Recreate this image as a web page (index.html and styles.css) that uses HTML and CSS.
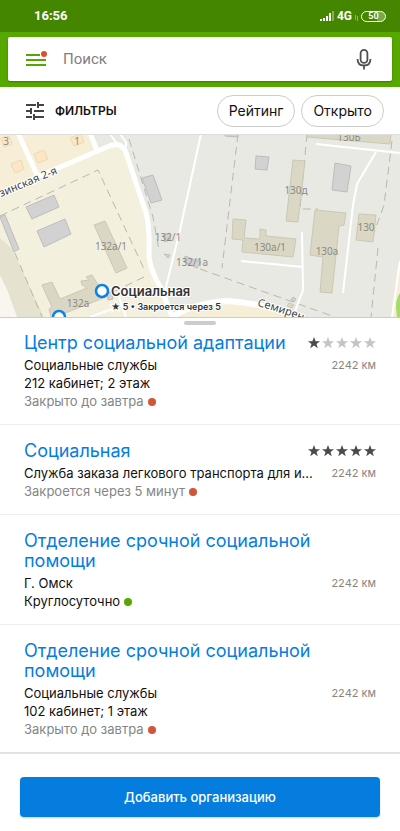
FILE: index.html
```html
<!DOCTYPE html>
<html lang="ru">
<head>
    <meta charset="UTF-8">
    <meta name="viewport" content="width=device-width, initial-scale=1.0">
    <title>Поиск</title>
    <link rel="stylesheet" href="styles.css">
</head>
<body>
    <header class="header">
        <div class="status-bar">
            <span class="time">16:56</span>
            <div class="status-icons">
                <svg width="16" height="12" viewBox="0 0 16 12" fill="#fff">
                    <path d="M1 9h2v2H1zM4 8h2v3H4zM7 6h2v5H7zM10 3h2v8h-2z"/>
                    <path d="M13 1h2v10h-2z" opacity=".35"/>
                </svg>
                <span class="network">4G</span>
                <svg class="arrows" width="5" height="6" viewBox="0 0 5 6" stroke="#fff" fill="none" opacity=".4">
                    <path d="M1.500 0v5M3.500 1v5"/>
                </svg>
                <span class="battery">50</span>
            </div>
        </div>
        <form class="search">
            <button class="menu-btn" type="button" aria-label="Меню">
                <svg width="24" height="20" viewBox="0 0 24 20">
                    <path d="M2 6h14M2 11h20M2 16h20" stroke="#56a800" stroke-width="2"/>
                    <circle cx="20" cy="5" r="3" fill="#d9502f"/>
                </svg>
            </button>
            <input class="search-input" type="text" placeholder="Поиск" aria-label="Поиск">
            <button class="mic-btn" type="button" aria-label="Голосовой поиск">
                <svg width="16" height="22" viewBox="0 0 16 22" fill="none" stroke="#505050" stroke-width="1.800">
                    <rect x="4.600" y="1.800" width="6.800" height="13" rx="3.400"/>
                    <path d="M1.500 11c0 4 2.500 6.500 6.500 6.500s6.500-2.500 6.500-6.500M8 17.500V21.500"/>
                </svg>
            </button>
        </form>
    </header>

    <div class="filters">
        <button class="filters-btn" type="button">
            <svg width="20" height="20" viewBox="0 0 20 20" stroke="#444" stroke-width="2" fill="none">
                <path d="M1 4h10M13 4h6M13 1v6M1 10h5M6 7v6M9 10h10M1 16h6M9 16h10M9 13v6"/>
            </svg>
            Фильтры
        </button>
        <button class="chip" type="button">Рейтинг</button>
        <button class="chip" type="button">Открыто</button>
    </div>

    <svg class="map" viewBox="0 134 400 183">
        <rect y="134" width="400" height="183" fill="#f3f0de"/>
        <path d="M0 134H92L97 150L38 177L0 194Z" fill="#f6eed6"/>
        <path d="M0 238L12 249L44 317H14L0 285Z" fill="#e6e2d0"/>
        <path d="M0 275L8 292L17 317H0Z" fill="#f8f6ee"/>
        <path d="M92 134H400V317H172L150 257L147 213L125 150L115 145L97 150Z" fill="#e9e9e3"/>
        <path d="M172 317Q200 301 240 303Q268 306 298 317Z" fill="#f6eed6"/>
        <path d="M397 270L392 317H400V265Z" fill="#f6eed6"/>
        <path d="M400 293Q394 300 397 317H400Z" fill="#a3dd66"/>

        <!-- footpaths and fences -->
        <g fill="none" stroke="#b9b7ae" stroke-dasharray="8 5">
            <path d="M0 216L98 170L144 269M15 253L42 317M144 277L84 306M129 139L153 217L159 250M238 134L222 268M307 134L300 209H318M392 141L384 205L371 241M378 248L371 317M200 269L335 317"/>
        </g>

        <!-- roads -->
        <g fill="none" stroke="#fff" stroke-linejoin="round">
            <path d="M-2 195L37 177L107 147Q119 141 125 150L145 210Q150 222 149 257Q151 272 161 288L173 319" stroke-width="5"/>
            <path d="M18 133L38 177M90 133L97 150" stroke-width="5"/>
            <path d="M171 318Q190 304 226 301Q266 303 304 319" stroke-width="6"/>
            <path d="M110 134L118 145M120 134L126 142V147M201 134L180 230L165 291M90 317L118 307M119 297L126 317M316 144L400 153M376 152L357 184L353 205L343 293M241 261L303 267M302 232L303 290L293 317M400 261L392 317" stroke-width="2"/>
        </g>

        <!-- grey buildings -->
        <g fill="#d2d2d2" stroke="#bdbdbb">
            <path d="M26 207L54 195L59 207L32 219ZM37 231L65 219L71 234L44 247ZM0 217L5 215L19 249L14 252ZM142 178L153 175L162 200L151 203ZM256 156L269 157L267 170L255 169ZM335 163L351 166L347 192L332 190ZM225 133H238V137L225 136ZM367 133H387V137H370ZM163 235L169 233L171 239L165 242ZM185 256L201 262L197 268L184 262ZM164 254L170 255L168 258ZM107 293L112 292L113 299L108 300ZM293 297L296 299L294 302L291 300Z"/>
        </g>

        <!-- residential buildings -->
        <g fill="#dbd7c5" stroke="#cbc7b3">
            <path d="M94 225L105 221L127 268L116 273ZM42 285L52 282L60 299L87 288L82 285L81 281L89 280L86 277L92 275L106 297L55 317H51L49 309L52 307ZM293 160L305 161L298 222L286 221ZM233 219L246 220L244 238L260 239V229L266 230V236L296 239L293 257L242 252L243 240L232 239ZM315 210L346 213L344 225L339 226L332 293L320 292L323 257L310 255ZM359 214L376 215L373 242L356 240ZM307 134H391L390 144L307 137ZM289 303L294 305L292 308L287 306Z"/>
        </g>
        <path d="M1 138L9 136L12 144L4 147ZM11 164L21 160L24 169L15 173ZM34 154L44 150L48 159L38 163ZM70 138L81 134L84 142L74 146Z" fill="#fde6c3" stroke="#eed9b4"/>

        <g class="house-labels">
            <text x="6" y="145">3</text>
            <text x="77" y="145">1</text>
            <text x="111" y="250">132а/1</text>
            <text x="78" y="307">132а</text>
            <text x="168" y="241">132/1</text>
            <text x="192" y="266">132/1а</text>
            <text x="296" y="194">130д</text>
            <text x="270" y="251">130а/1</text>
            <text x="327" y="255">130а</text>
            <text x="366" y="231">130</text>
            <text x="349" y="141">130Б</text>
        </g>

        <path id="street-left" d="M1 197L66 170" fill="none"/>
        <path id="street-right" d="M257 306Q285 313 312 325" fill="none"/>
        <g class="street-labels">
            <text><textPath href="#street-left">зинская 2-я</textPath></text>
            <text><textPath href="#street-right">Семирен</textPath></text>
        </g>

        <g fill="#fff" stroke="#0b80ea" stroke-width="2.500">
            <circle cx="102" cy="291" r="6"/>
            <circle cx="59" cy="317" r="6"/>
        </g>
        <text class="poi-name" x="111" y="296">Социальная</text>
        <text class="poi-note" x="111" y="310">★ 5 • Закроется через 5</text>
        <path d="M0 134.500H400" stroke="#ddd"/>
    </svg>

    <main class="sheet">
        <div class="handle"></div>
        <ul class="results">
            <li class="result">
                <div class="result-head">
                    <h2><a href="#">Центр социальной адаптации</a></h2>
                    <svg class="stars" role="img" aria-label="1 из 5" width="68" height="12" viewBox="0 0 68 12">
                        <defs>
                            <path id="star" d="M6 0L7.600 4.200H12L8.500 6.900L9.800 11.200L6 8.600L2.200 11.200L3.500 6.900L0 4.200H4.400Z"/>
                        </defs>
                        <use href="#star" fill="#4a4a4a"/>
                        <g fill="#c4c4c4">
                            <use href="#star" x="14"/>
                            <use href="#star" x="28"/>
                            <use href="#star" x="42"/>
                            <use href="#star" x="56"/>
                        </g>
                    </svg>
                </div>
                <div class="result-row">
                    <p>Социальные службы</p>
                    <span class="distance">2242 км</span>
                </div>
                <p>212 кабинет; 2 этаж</p>
                <p class="hours closed">Закрыто до завтра</p>
            </li>
            <li class="result">
                <div class="result-head">
                    <h2><a href="#">Социальная</a></h2>
                    <svg class="stars" role="img" aria-label="5 из 5" width="68" height="12" viewBox="0 0 68 12" fill="#4a4a4a">
                        <use href="#star"/>
                        <use href="#star" x="14"/>
                        <use href="#star" x="28"/>
                        <use href="#star" x="42"/>
                        <use href="#star" x="56"/>
                    </svg>
                </div>
                <div class="result-row">
                    <p>Служба заказа легкового транспорта для и...</p>
                    <span class="distance">2242 км</span>
                </div>
                <p class="hours closed">Закроется через 5 минут</p>
            </li>
            <li class="result">
                <div class="result-head">
                    <h2><a href="#">Отделение срочной социальной помощи</a></h2>
                </div>
                <div class="result-row">
                    <p>Г. Омск</p>
                    <span class="distance">2242 км</span>
                </div>
                <p class="hours open">Круглосуточно</p>
            </li>
            <li class="result">
                <div class="result-head">
                    <h2><a href="#">Отделение срочной социальной помощи</a></h2>
                </div>
                <div class="result-row">
                    <p>Социальные службы</p>
                    <span class="distance">2242 км</span>
                </div>
                <p>102 кабинет; 1 этаж</p>
                <p class="hours closed">Закрыто до завтра</p>
            </li>
        </ul>
    </main>

    <footer class="footer">
        <button class="add-btn" type="button">Добавить организацию</button>
    </footer>
</body>
</html>
```

FILE: styles.css
```css
:root {
    --green: #56a800;
    --dark-green: #458600;
    --blue: #057ddf;
    --red: #d15536;
    --grey: #858585;
}

* {
    margin: 0;
    padding: 0;
    box-sizing: border-box;
}

body {
    font-family: Inter, "Liberation Sans", sans-serif;
    font-size: 14px;
    line-height: 18px;
    background-color: white;
    color: #111;
}

button {
    border: none;
    background: none;
    font: inherit;
    color: inherit;
    cursor: pointer;
}

svg {
    display: block;
}

.header {
    background-color: var(--green);
    padding-bottom: 6px;
}

.status-bar {
    display: flex;
    justify-content: space-between;
    align-items: center;
    height: 32px;
    padding: 0 14px 0 34px;
    background-color: var(--dark-green);
    color: white;
    font-family: Roboto, sans-serif;
    font-weight: 700;
}

.time {
    font-size: 13px;
}

.status-icons {
    display: flex;
    align-items: center;
    gap: 2px;
}

.network {
    font-size: 12px;
}

.arrows {
    margin-top: 4px;
}

.battery {
    width: 25px;
    border: 1px solid white;
    border-radius: 6px;
    background: linear-gradient(90deg, transparent 65%, #79a84b 65%);
    font-size: 9px;
    line-height: 9px;
    text-align: center;
}

.search {
    display: flex;
    align-items: center;
    height: 44px;
    margin: 5px 8px 0;
    padding: 0 20px 0 16px;
    border-radius: 2px;
    background-color: white;
    box-shadow: 0 1px 2px rgba(0, 0, 0, 0.3);
}

.search-input {
    flex: 1;
    min-width: 0;
    padding: 0 15px;
    border: none;
    outline: none;
    font-family: Roboto, sans-serif;
    font-size: 15px;
}

.search-input::placeholder {
    color: #808080;
}

.filters {
    display: flex;
    align-items: center;
    gap: 6px;
    height: 47px;
    padding: 0 16px 0 25px;
}

.filters-btn {
    display: flex;
    align-items: center;
    gap: 10px;
    margin-right: auto;
    font-size: 12px;
    font-weight: 600;
    text-transform: uppercase;
}

.chip {
    height: 32px;
    padding: 0 11px;
    border: 1px solid #ccc;
    border-radius: 16px;
}

.map {
    width: 100%;
}

.house-labels {
    font-family: "Noto Sans", sans-serif;
    font-size: 10px;
    text-anchor: middle;
    fill: #8b8a82;
}

.street-labels {
    font-family: "Noto Sans", sans-serif;
    font-size: 11px;
    fill: #444;
    stroke: white;
    stroke-width: 2px;
    paint-order: stroke;
}

.poi-name,
.poi-note {
    font-weight: 600;
    fill: #333;
    stroke: white;
    stroke-width: 2px;
    paint-order: stroke;
}

.poi-name {
    font-size: 13px;
}

.poi-note {
    font-size: 9px;
}

.sheet {
    border-top: 1px solid #ccc;
    border-bottom: 2px solid #e2e2e2;
}

.handle {
    width: 32px;
    height: 4px;
    margin: 3px auto -8px;
    border-radius: 2px;
    background-color: #ccc;
}

.results {
    list-style: none;
}

.result {
    padding: 16px 24px 14px;
}

.result + .result {
    border-top: 1px solid #eee;
}

.result-head {
    display: flex;
    justify-content: space-between;
    align-items: flex-start;
    margin-bottom: 3px;
}

.result h2 {
    font-size: 18px;
    font-weight: 400;
    line-height: 20px;
}

.result a {
    color: var(--blue);
    text-decoration: none;
}

.result p {
    font-size: 13px;
}

.stars {
    flex: none;
    margin-top: 4px;
}

.result-row {
    display: flex;
    justify-content: space-between;
    gap: 9px;
}

.result-row p {
    overflow: hidden;
    text-overflow: ellipsis;
    white-space: nowrap;
}

.distance {
    flex: none;
    color: var(--grey);
    font-size: 11px;
}

.hours::after {
    content: "";
    display: inline-block;
    width: 8px;
    height: 8px;
    margin-left: 4px;
    border-radius: 50%;
}

.closed {
    color: var(--grey);
}

.closed::after {
    background-color: var(--red);
}

.open::after {
    background-color: var(--green);
}

.footer {
    padding: 23px 20px 14px;
}

.add-btn {
    width: 100%;
    height: 40px;
    border-radius: 4px;
    background-color: var(--blue);
    color: white;
    font-size: 13px;
    font-weight: 500;
    box-shadow: 0 1px 2px rgba(0, 0, 0, 0.2);
}
```
